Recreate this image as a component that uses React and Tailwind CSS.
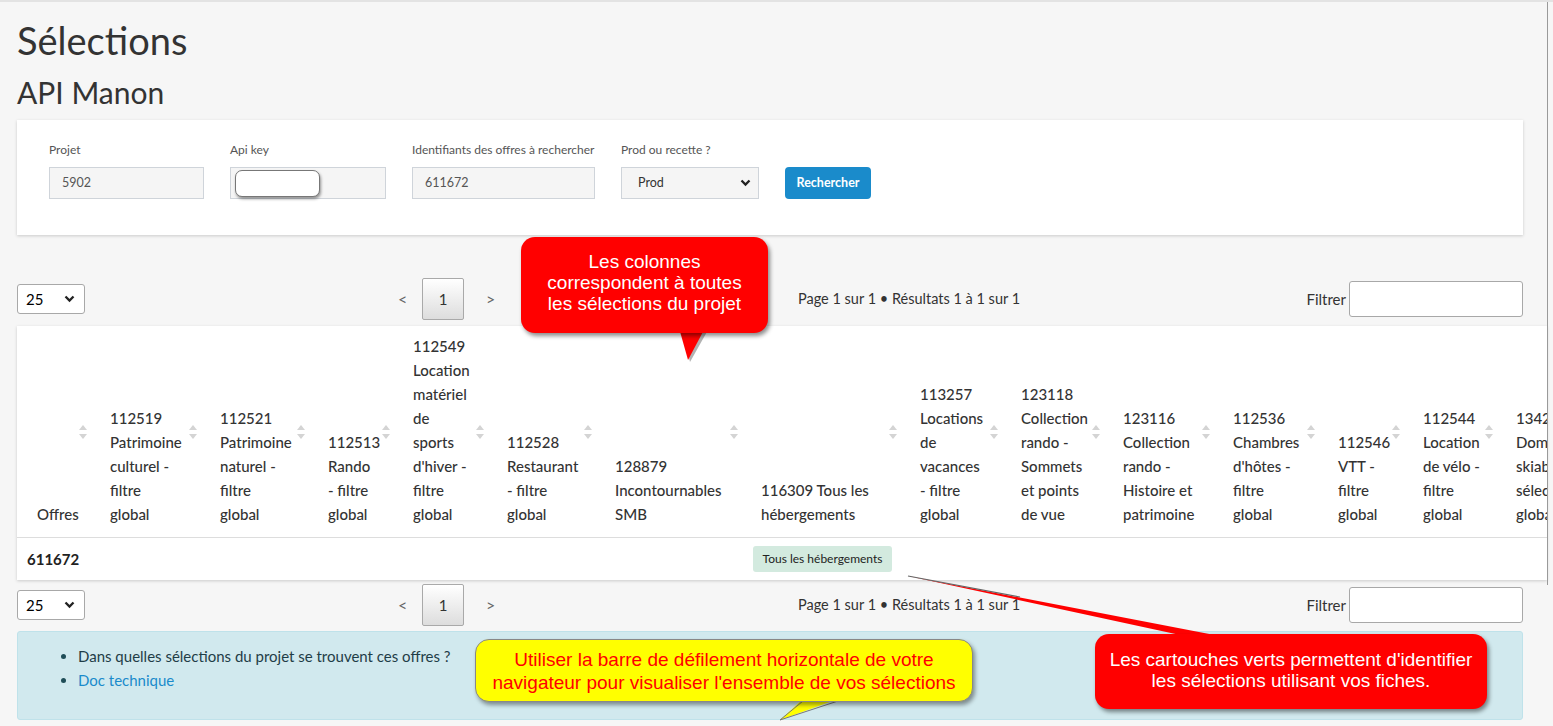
import React from "react";

const SortIcon = () => (
  <svg width="8" height="14" viewBox="0 0 8 14" className="shrink-0 self-center mr-[15px] ml-auto">
    <path d="M4 0 L8 5 H0 Z" fill="#d4d4d4" />
    <path d="M0 9 H8 L4 14 Z" fill="#d4d4d4" />
  </svg>
);

const Chevron = ({ className = "" }) => (
  <svg width="11" height="8" viewBox="0 0 11 8" className={className}>
    <path d="M1.5 1.5 L5.5 5.5 L9.5 1.5" stroke="#222" strokeWidth="2.3" fill="none" />
  </svg>
);

const cols = [
  { w: 85, pl: 20, lines: ["Offres"] },
  { w: 110, lines: ["112519", "Patrimoine", "culturel -", "filtre", "global"] },
  { w: 108, lines: ["112521", "Patrimoine", "naturel -", "filtre", "global"] },
  { w: 85, lines: ["112513", "Rando", "- filtre", "global"] },
  { w: 94, lines: ["112549", "Location", "matériel", "de", "sports", "d'hiver -", "filtre", "global"] },
  { w: 108, lines: ["112528", "Restaurant", "- filtre", "global"] },
  { w: 146, lines: ["128879", "Incontournables", "SMB"] },
  { w: 159, lines: ["116309 Tous les", "hébergements"] },
  { w: 101, lines: ["113257", "Locations", "de", "vacances", "- filtre", "global"] },
  { w: 102, lines: ["123118", "Collection", "rando -", "Sommets", "et points", "de vue"] },
  { w: 110, lines: ["123116", "Collection", "rando -", "Histoire et", "patrimoine"] },
  { w: 105, lines: ["112536", "Chambres", "d'hôtes -", "filtre", "global"] },
  { w: 85, lines: ["112546", "VTT -", "filtre", "global"] },
  { w: 93, lines: ["112544", "Location", "de vélo -", "filtre", "global"] },
  { w: 130, lines: ["134250", "Domaine", "skiable -", "sélection", "globale"] },
];

const Pager = () => (
  <div className="flex items-center h-[42px] text-[15px]">
    <div className="w-[381px] shrink-0">
      <div className="w-[68px] h-[30px] bg-white border border-[#a8a8a8] rounded-[3px] flex items-center justify-between pl-[8px] pr-[9px] text-black">
        <span>25</span>
        <Chevron />
      </div>
    </div>
    <div className="w-[24px] shrink-0 text-[#666] text-[16px]">&lt;</div>
    <div className="w-[42px] h-[42px] shrink-0 border border-[#a9a9a9] rounded-[2px] bg-gradient-to-b from-white to-[#dddddd] flex items-center justify-center text-[#333]">
      1
    </div>
    <div className="w-[334px] shrink-0 pl-[22px] text-[#666] text-[16px]">&gt;</div>
    <div className="text-[#333] text-[14.5px] whitespace-nowrap">Page 1 sur 1 • Résultats 1 à 1 sur 1</div>
    <div className="ml-auto flex items-center gap-[3px] text-[#333]">
      <span>Filtrer</span>
      <div className="w-[174px] h-[36px] bg-white border border-[#a8a8a8] rounded-[3px]" />
    </div>
  </div>
);

export default function App() {
  return (
    <div className="relative w-[1553px] h-[726px] overflow-hidden bg-[#f6f6f6] border-t-2 border-[#e3e3e3] font-['Lato',sans-serif] text-[#333]">
      <div className="flex flex-col pl-[17px] pr-[30px]">
        <h1 className="pt-[16px] text-[38px] leading-[44px] text-[#333] font-normal">Sélections</h1>
        <h2 className="mt-[12px] text-[30px] leading-[36px] text-[#333] font-normal">API Manon</h2>

        {/* Form card */}
        <div className="mt-[10px] bg-white h-[115px] shadow-[0_1px_3px_rgba(0,0,0,0.18)] pt-[22px] pl-[32px] flex items-end pb-[36px] gap-[26px]">
          <div className="w-[155px]">
            <div className="text-[12px] leading-[16px] text-[#555] mb-[9px]">Projet</div>
            <div className="h-[32px] bg-[#f5f5f5] border border-[#cfd4da] flex items-center pl-[12px] text-[12.5px] text-[#555]">5902</div>
          </div>
          <div className="w-[156px]">
            <div className="text-[12px] leading-[16px] text-[#555] mb-[9px]">Api key</div>
            <div className="relative h-[32px] bg-[#f5f5f5] border border-[#cfd4da]">
              <div className="absolute left-[4px] top-[2px] w-[85px] h-[27px] bg-white border border-[#777] rounded-[7px] shadow-[1px_2px_3px_rgba(0,0,0,0.4)]" />
            </div>
          </div>
          <div className="w-[183px]">
            <div className="text-[12px] leading-[16px] text-[#555] mb-[9px] whitespace-nowrap">Identifiants des offres à rechercher</div>
            <div className="h-[32px] bg-[#f5f5f5] border border-[#cfd4da] flex items-center pl-[12px] text-[12.5px] text-[#555]">611672</div>
          </div>
          <div className="w-[138px]">
            <div className="text-[12px] leading-[16px] text-[#555] mb-[9px]">Prod ou recette ?</div>
            <div className="h-[32px] bg-[#f5f5f5] border border-[#cfd4da] flex items-center justify-between pl-[16px] pr-[7px] text-[12.5px] text-[#333]">
              <span>Prod</span>
              <Chevron />
            </div>
          </div>
          <div className="w-[86px] h-[32px] bg-[#1a8bcb] rounded-[4px] flex items-center justify-center text-white text-[12.5px] font-bold">
            Rechercher
          </div>
        </div>

        <div className="mt-[43px]">
          <Pager />
        </div>

        {/* Table */}
        <div className="mt-[6px] w-[1530px] overflow-hidden shadow-[0_1px_3px_rgba(0,0,0,0.18)]">
          <div className="w-[1620px] bg-white">
            <div className="flex h-[212px] border-b border-[#dddddd]">
              {cols.map((c, i) => (
                <div
                  key={i}
                  className="flex shrink-0 h-full"
                  style={{ width: c.w, paddingLeft: c.pl ?? 8 }}
                >
                  <div className="self-end pb-[11px] text-[15px] leading-[24px] font-medium text-[#333] whitespace-nowrap">
                    {c.lines.map((l, j) => (
                      <div key={j}>{l}</div>
                    ))}
                  </div>
                  <SortIcon />
                </div>
              ))}
            </div>
            <div className="flex h-[42px] items-center">
              <div className="w-[736px] shrink-0 pl-[10px] text-[15px] font-bold text-[#222]">611672</div>
              <div className="w-[139px] h-[26px] bg-[#d3eadf] rounded-[3px] flex items-center justify-center text-[12px] text-[#222]">
                Tous les hébergements
              </div>
            </div>
          </div>
        </div>

        <div className="mt-[4px]">
          <Pager />
        </div>

        {/* Alert */}
        <div className="mt-[5px] h-[89px] bg-[#d1e9ee] border border-[#bfe2ea] rounded-[3px] px-[20px] pt-[12px]">
          <ul className="list-disc pl-[40px] text-[15px] leading-[24px] text-[#1f3d47] marker:text-[#1f4d57]">
            <li>Dans quelles sélections du projet se trouvent ces offres ?</li>
            <li className="text-[#1a8bcb]">Doc technique</li>
          </ul>
        </div>
      </div>

      {/* right edge line */}
      <div className="absolute left-[1547px] top-0 h-[583px] w-px bg-[#9a9a9a]" />

      {/* Callout tails */}
      <svg className="absolute left-0 top-0 pointer-events-none" width="1553" height="726">
        <polygon points="682,328 708,328 690,360" fill="rgba(0,0,0,0.3)" />
        <polygon points="679,326 705,326 688,358" fill="#ff0000" />
        <polygon points="803,697 838,697 780,718" fill="#ffff00" />
        <polyline points="803,699 780,718 838,699" fill="none" stroke="#777" strokeWidth="1" />
        <polygon points="908,574 1230,636 1194,636" fill="#ff0000" />
        <line x1="908" y1="574" x2="1020" y2="595" stroke="#666" strokeWidth="1.2" />
      </svg>

      {/* Callout 1 */}
      <div className="absolute left-[521px] top-[235px] w-[247px] h-[96px] bg-[#ff0000] rounded-[14px] shadow-[2px_3px_4px_rgba(0,0,0,0.45)] pt-[14px] text-center text-white font-['Liberation_Sans',Arial,sans-serif] text-[19px] leading-[21px]">
        <div>Les colonnes</div>
        <div>correspondent à toutes</div>
        <div>les sélections du projet</div>
      </div>

      {/* Callout 2 (yellow) */}
      <div className="absolute left-[475px] top-[637px] w-[498px] h-[63px] bg-[#ffff00] border border-[#888] rounded-[14px] shadow-[2px_3px_4px_rgba(0,0,0,0.4)] pt-[8px] text-center text-[#ff0000] font-['Liberation_Sans',Arial,sans-serif] text-[19px] leading-[23px]">
        <div>Utiliser la barre de défilement horizontale de votre</div>
        <div>navigateur pour visualiser l'ensemble de vos sélections</div>
      </div>

      {/* Callout 3 */}
      <div className="absolute left-[1095px] top-[632px] w-[392px] h-[75px] bg-[#ff0000] rounded-[14px] shadow-[2px_3px_4px_rgba(0,0,0,0.45)] pt-[15px] text-center text-white font-['Liberation_Sans',Arial,sans-serif] text-[19px] leading-[21px]">
        <div>Les cartouches verts permettent d'identifier</div>
        <div>les sélections utilisant vos fiches.</div>
      </div>
    </div>
  );
}
